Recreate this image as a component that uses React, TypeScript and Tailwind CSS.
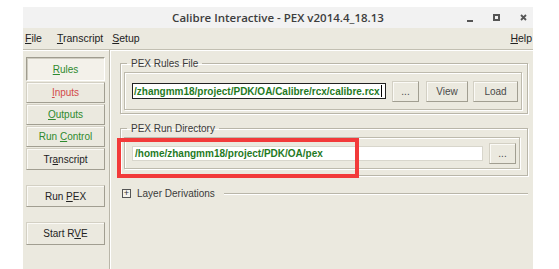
import type { ReactNode } from "react";

const FONT = { fontFamily: '"Liberation Sans", Arial, sans-serif' };

function Underlined({ text, at }: { text: string; at: number }) {
  return (
    <span className="whitespace-pre">
      {text.slice(0, at)}
      <span className="underline underline-offset-[1px]">{text[at]}</span>
      {text.slice(at + 1)}
    </span>
  );
}

function SideButton({
  children,
  color,
  pressed,
  className,
}: {
  children: ReactNode;
  color: string;
  pressed?: boolean;
  className: string;
}) {
  return (
    <div
      className={`flex w-[79px] items-center justify-center text-[10px] ${color} ${className} ${
        pressed
          ? "border border-[#9f9c8f] border-b-white border-r-white bg-[#f3f1ea] shadow-[inset_1px_1px_0_#cfccc0]"
          : "border border-[#d3d0c4] border-b-[#a19e91] border-r-[#a19e91] bg-[#ebe9df] shadow-[inset_1px_1px_0_#fbfaf6]"
      }`}
    >
      {children}
    </div>
  );
}

function PushButton({ label, w }: { label: string; w: string }) {
  return (
    <div
      className={`flex h-[21px] ${w} items-center justify-center border border-[#d3d0c4] border-b-[#a19e91] border-r-[#a19e91] bg-[#ebe9df] text-[10px] text-[#4a4a4a] shadow-[inset_1px_1px_0_#fbfaf6]`}
    >
      {label}
    </div>
  );
}

function Group({ title, children, className }: { title: string; children: ReactNode; className: string }) {
  return (
    <fieldset
      className={`w-[408px] border border-[#b9b6a9] shadow-[inset_1px_1px_0_#fff,1px_1px_0_#fff] ${className}`}
    >
      <legend className="ml-[6px] px-[4px] text-[10px] leading-[13px] text-[#3a3a3a]">{title}</legend>
      {children}
    </fieldset>
  );
}

export default function App() {
  return (
    <div className="h-[269px] w-[559px] bg-white pl-[23px] pt-[7px]" style={FONT}>
      <div className="relative flex h-[262px] w-[510px] flex-col bg-[#ebe9df]">
        {/* title bar */}
        <div className="relative flex h-[21px] items-center justify-center bg-[#f2f2f2]">
          <span
            className="text-[11.5px] font-semibold text-[#3d3d3d]"
            style={{ fontFamily: '"Open Sans", "Liberation Sans", sans-serif' }}
          >
            Calibre Interactive - PEX v2014.4_18.13
          </span>
          <div className="absolute right-[6px] top-0 flex h-[21px] items-center gap-[20px] text-[#444]">
            <div className="mt-[6px] h-[2px] w-[6px] bg-[#555]" />
            <div className="h-[7px] w-[7px] border-2 border-[#555]" />
            <svg width="7" height="7" viewBox="0 0 7 7">
              <path d="M1 1L6 6M6 1L1 6" stroke="#555" strokeWidth="1.8" />
            </svg>
          </div>
        </div>

        {/* menu bar */}
        <div className="flex h-[22px] items-center border-b border-[#c2bfb2] pl-[2px] pr-[1px] text-[10.5px] text-[#222] shadow-[0_1px_0_#fff]">
          <span className="mr-[15px]">
            <Underlined text="File" at={0} />
          </span>
          <span className="mr-[9px]">
            <Underlined text="Transcript" at={0} />
          </span>
          <span>
            <Underlined text="Setup" at={0} />
          </span>
          <span className="ml-auto">
            <Underlined text="Help" at={0} />
          </span>
        </div>

        <div className="flex flex-1">
          {/* side bar */}
          <div className="flex w-[87px] flex-col border-r border-[#b9b6a9] pl-[3px] pt-[7px] shadow-[1px_0_0_#fff]">
            <SideButton pressed color="text-[#2e8a2e]" className="h-[24px]">
              <Underlined text="Rules" at={0} />
            </SideButton>
            <SideButton color="text-[#d24a4a]" className="mt-px h-[21px]">
              <Underlined text="Inputs" at={0} />
            </SideButton>
            <SideButton color="text-[#2e8a2e]" className="mt-px h-[21px]">
              <Underlined text="Outputs" at={0} />
            </SideButton>
            <SideButton color="text-[#2e8a2e]" className="mt-px h-[21px]">
              <Underlined text="Run Control" at={4} />
            </SideButton>
            <SideButton color="text-[#222]" className="mt-px h-[22px]">
              <Underlined text="Transcript" at={2} />
            </SideButton>
            <SideButton color="text-[#222]" className="mt-[15px] h-[22px]">
              <Underlined text="Run PEX" at={4} />
            </SideButton>
            <SideButton color="text-[#222]" className="mt-[15px] h-[23px]">
              <Underlined text="Start RVE" at={7} />
            </SideButton>
          </div>

          {/* main */}
          <div className="flex flex-1 flex-col pl-[10px] pt-[7px]">
            <Group title="PEX Rules File" className="">
              <div className="mb-[3px] ml-[3px] mr-[5px] mt-[2px] flex h-[38px] items-center border border-[#bdbaad] pl-[7px] shadow-[inset_1px_1px_0_#fff,1px_1px_0_#fff]">
                <div className="flex h-[16px] w-[254px] items-center border border-[#222] bg-white pl-[1px] text-[10px] font-bold text-[#1f7a1f]">
                  /zhangmm18/project/PDK/OA/Calibre/rcx/calibre.rcx
                  <span className="ml-px h-[12px] w-px bg-black" />
                </div>
                <div className="ml-[6px]">
                  <PushButton label="..." w="w-[27px]" />
                </div>
                <div className="ml-[7px]">
                  <PushButton label="View" w="w-[42px]" />
                </div>
                <div className="ml-[5px]">
                  <PushButton label="Load" w="w-[45px]" />
                </div>
              </div>
            </Group>

            <Group title="PEX Run Directory" className="mt-[8px]">
              <div className="mb-[6px] ml-[3px] mr-[7px] mt-[2px] flex h-[32px] items-center border border-[#bdbaad] pl-[7px] shadow-[inset_1px_1px_0_#fff,1px_1px_0_#fff]">
                <div className="flex h-[15px] w-[351px] items-center border border-[#d8d6cc] bg-white pl-[2px] text-[10px] font-bold text-[#1f7a1f]">
                  /home/zhangmm18/project/PDK/OA/pex
                </div>
                <div className="ml-[6px]">
                  <PushButton label="..." w="w-[27px]" />
                </div>
              </div>
            </Group>

            <div className="mt-[10px] flex w-[408px] items-center pl-[2px]">
              <div className="flex h-[9px] w-[9px] items-center justify-center border border-[#555] bg-[#f4f2ec] text-[9px] leading-none text-[#333]">
                +
              </div>
              <span className="ml-[6px] text-[10px] text-[#3a3a3a]">Layer Derivations</span>
              <div className="ml-[9px] h-px flex-1 bg-[#b9b6a9] shadow-[0_1px_0_#fff]" />
            </div>
          </div>
        </div>

        {/* red annotation box */}
        <div className="absolute left-[94px] top-[131px] h-[40px] w-[242px] border-[4px] border-[#f23a3a]" />
      </div>
    </div>
  );
}
